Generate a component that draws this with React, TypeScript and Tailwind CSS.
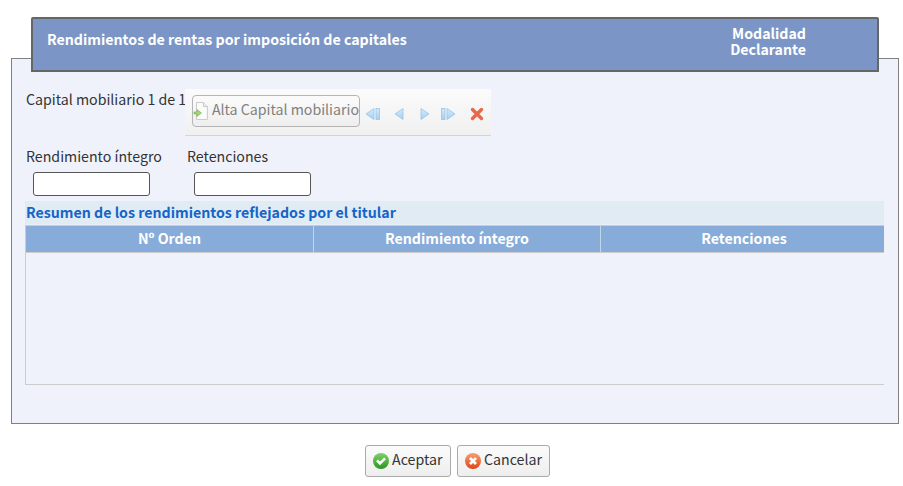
import React from "react";

const font = { fontFamily: '"Noto Sans CJK SC", "Noto Sans", sans-serif' };

function Arrow({ dir, bar }: { dir: "l" | "r"; bar?: boolean }) {
  const w = bar ? 16 : 12;
  return (
    <svg width={w} height="14" viewBox={`0 0 ${w} 14`}>
      <defs>
        <linearGradient id={`g${dir}${bar ? 1 : 0}`} x1="0" y1="0" x2="0" y2="1">
          <stop offset="0" stopColor="#d6eafa" />
          <stop offset="1" stopColor="#a6d0f0" />
        </linearGradient>
      </defs>
      {dir === "l" ? (
        bar ? (
          <g fill={`url(#gl1)`} stroke="#94c4ea" strokeWidth="0.8">
            <path d="M1 7 L9 1.5 V12.5 Z" />
            <rect x="11" y="1.5" width="3.5" height="11" />
          </g>
        ) : (
          <path d="M3 7 L11 1.5 V12.5 Z" fill="url(#gl0)" stroke="#94c4ea" strokeWidth="0.8" />
        )
      ) : bar ? (
        <g fill={`url(#gr1)`} stroke="#94c4ea" strokeWidth="0.8">
          <rect x="1.5" y="1.5" width="3.5" height="11" />
          <path d="M7 1.5 L15 7 L7 12.5 Z" />
        </g>
      ) : (
        <path d="M3 1.5 L11 7 L3 12.5 Z" fill="url(#gr0)" stroke="#94c4ea" strokeWidth="0.8" />
      )}
    </svg>
  );
}

function DocAdd() {
  return (
    <svg width="16" height="20" viewBox="0 0 16 20">
      <path d="M3.5 1.5 H10.5 L14.5 5.5 V18.5 H3.5 Z" fill="#fbfbfb" stroke="#c9c9c9" />
      <path d="M10.5 1.5 V5.5 H14.5" fill="#eee" stroke="#c9c9c9" />
      <path d="M1 11 H4 V8.5 L8.5 12 L4 15.5 V13 H1 Z" fill="#a4d77a" stroke="#6cae3f" strokeWidth="0.6" />
    </svg>
  );
}

function Check() {
  return (
    <svg width="16" height="16" viewBox="0 0 16 16">
      <defs>
        <linearGradient id="cg" x1="0" y1="0" x2="0" y2="1">
          <stop offset="0" stopColor="#7fd268" />
          <stop offset="1" stopColor="#2b9522" />
        </linearGradient>
      </defs>
      <circle cx="8" cy="8" r="8" fill="url(#cg)" />
      <path d="M4 7.4 L7 10.4 L12 5.4" fill="none" stroke="#fff" strokeWidth="2.6" />
    </svg>
  );
}

function Cross() {
  return (
    <svg width="16" height="16" viewBox="0 0 16 16">
      <defs>
        <linearGradient id="xg" x1="0" y1="0" x2="0" y2="1">
          <stop offset="0" stopColor="#f8a070" />
          <stop offset="1" stopColor="#e04518" />
        </linearGradient>
      </defs>
      <circle cx="8" cy="8" r="8" fill="url(#xg)" />
      <path d="M5 5 L11 11 M11 5 L5 11" fill="none" stroke="#fff" strokeWidth="2.8" />
    </svg>
  );
}

export default function App() {
  return (
    <div className="h-[486px] w-[903px] overflow-hidden bg-white pt-[17px] text-[#333]" style={font}>
      <div className="relative z-10 ml-[31px] flex h-[55px] w-[848px] rounded-t-[2px] border-2 border-[#666] bg-[#7b96c6] font-bold text-white">
        <div className="ml-[14px] mt-[10px] text-[14.2px] leading-[20px]">Rendimientos de rentas por imposición de capitales</div>
        <div className="ml-auto mr-[71px] mt-[6px] text-right text-[14.2px] leading-[16px]">
          <div>Modalidad</div>
          <div>Declarante</div>
        </div>
      </div>

      <div className="ml-[11px] mt-[-14px] h-[366px] w-[888px] border border-[#808080] bg-[#eff2fa] pl-[13px]">
        <div className="ml-px flex h-[78px] pt-[30px]">
          <div className="w-[159px] whitespace-nowrap text-[14.2px] leading-[20px]">Capital mobiliario 1 de 1</div>
          <div className="flex h-[47px] w-[306px] items-start border-b border-[#d4d4d4] bg-gradient-to-b from-[#fbfbfb] to-[#f0f0f0]">
            <div className="ml-[7px] mt-[6px] flex h-[32px] w-[168px] items-center overflow-hidden whitespace-nowrap rounded-[4px] border border-[#b5b5b5] bg-gradient-to-b from-[#fbfbfb] to-[#eeeeee] text-[14.2px] text-[#808080]">
              <DocAdd />
              <span className="mb-[3px] ml-[3px]">Alta Capital mobiliario</span>
            </div>
            <div className="ml-[5px] mt-[18px] flex items-center">
              <Arrow dir="l" bar />
              <span className="w-[11px]" />
              <Arrow dir="l" />
              <span className="w-[14px]" />
              <Arrow dir="r" />
              <span className="w-[10px]" />
              <Arrow dir="r" bar />
              <span className="w-[14px]" />
              <svg width="14" height="14" viewBox="0 0 14 14">
                <path d="M2.5 2.5 L11.5 11.5 M11.5 2.5 L2.5 11.5" stroke="#e8684a" strokeWidth="3.4" strokeLinecap="round" />
              </svg>
            </div>
          </div>
        </div>

        <div className="ml-px mt-[9px] flex text-[14.2px] leading-[20px]">
          <div className="w-[161px]">
            <div>Rendimiento íntegro</div>
            <div className="ml-[7px] mt-[6px] h-[24px] w-[117px] rounded-[3px] border border-[#555] bg-white" />
          </div>
          <div>
            <div>Retenciones</div>
            <div className="ml-[7px] mt-[6px] h-[24px] w-[117px] rounded-[3px] border border-[#555] bg-white" />
          </div>
        </div>

        <div className="mt-[5px] h-[24px] w-[859px] border-b border-[#e9eef6] bg-[#e0ebf4] pl-px text-[14.2px] font-bold leading-[23px] text-[#1565c8]">
          Resumen de los rendimientos reflejados por el titular
        </div>

        <div className="h-[160px] w-[859px] border-b border-l border-t border-[#cccccc]">
          <div className="flex h-[27px] border-b border-[#cccccc] bg-[#87acd9] text-[14.2px] font-bold leading-[25px] text-white">
            <div className="w-[288px] border-r border-[#c3d5ea] text-center">Nº Orden</div>
            <div className="w-[287px] border-r border-[#c3d5ea] text-center">Rendimiento íntegro</div>
            <div className="flex-1 pl-[3px] text-center">Retenciones</div>
          </div>
        </div>
      </div>

      <div className="mt-[21px] flex justify-center gap-[6px] pl-[12px] text-[14.2px]">
        <div className="flex h-[32px] w-[86px] items-center gap-[3px] rounded-[3px] border border-[#aaaaaa] bg-gradient-to-b from-[#fbfbfb] to-[#eeeeee] pl-[7px]">
          <Check />
          <span className="mb-[2px]">Aceptar</span>
        </div>
        <div className="flex h-[32px] w-[93px] items-center gap-[3px] rounded-[3px] border border-[#aaaaaa] bg-gradient-to-b from-[#fbfbfb] to-[#eeeeee] pl-[7px]">
          <Cross />
          <span className="mb-[2px]">Cancelar</span>
        </div>
      </div>
    </div>
  );
}
